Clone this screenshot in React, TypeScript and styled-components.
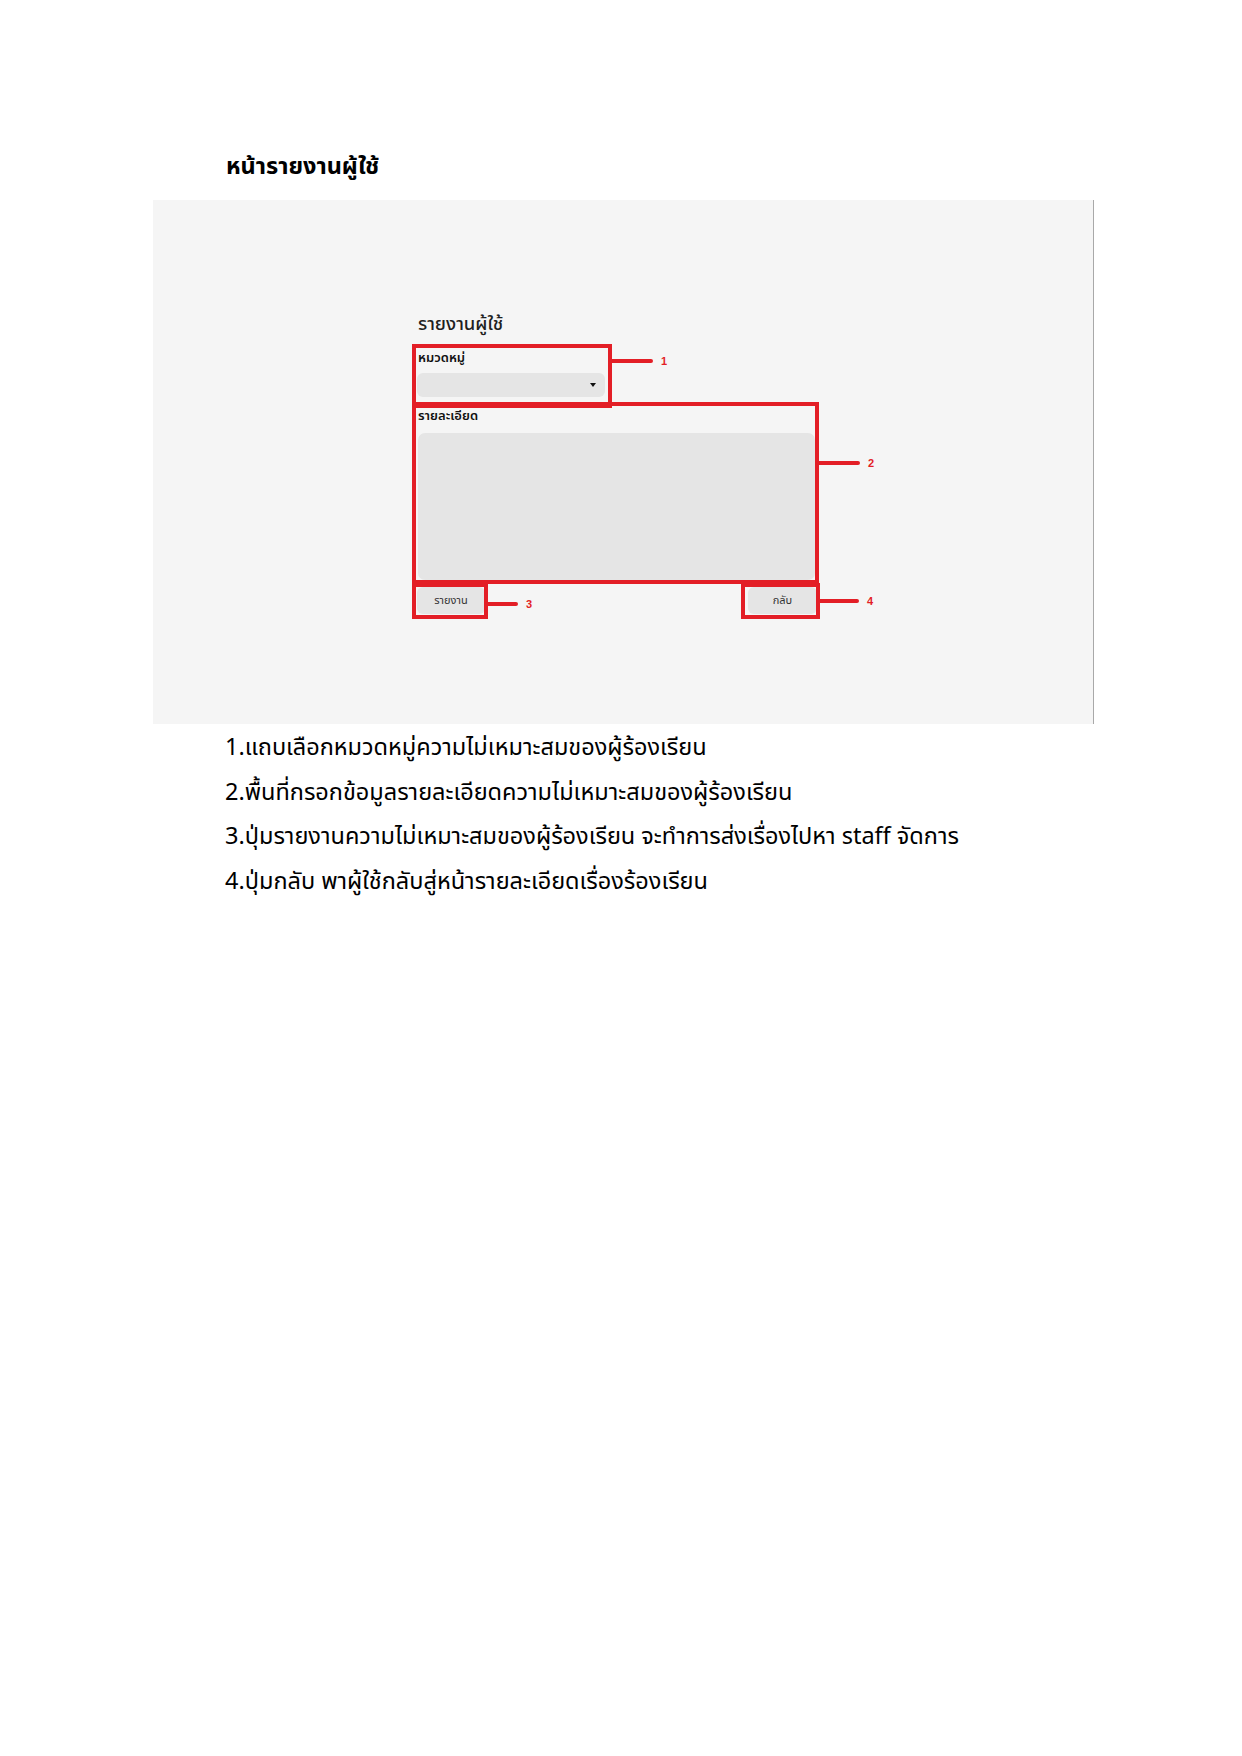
import styled, { createGlobalStyle } from "styled-components";

const GlobalStyle = createGlobalStyle`
  html, body {
    margin: 0;
    padding: 0;
    background: #ffffff;
  }
  body {
    font-family: "Noto Sans", "Noto Sans Thai", "DejaVu Sans", sans-serif;
    color: #000000;
  }
`;

const RED = "#e31e26";

const Page = styled.div`
  width: 1242px;
  min-height: 1756px;
  padding: 148px 0 0 153px;
  box-sizing: border-box;
`;

const Heading = styled.h1`
  margin: 0 0 18px 73px;
  font-size: 23.5px;
  line-height: 34px;
  font-weight: 700;
  color: #000;
`;

const Shot = styled.section`
  width: 941px;
  height: 524px;
  box-sizing: border-box;
  background: #f5f5f5;
  border-right: 1px solid #a9a9a9;
  padding: 110px 0 0 264px;
`;

const Form = styled.div`
  width: 400px;
  display: flex;
  flex-direction: column;
  align-items: flex-start;
`;

const FormTitle = styled.h2`
  margin: 0 0 12px 1px;
  font-size: 18.5px;
  line-height: 26px;
  font-weight: 500;
  color: #1f1f1f;
`;

const Field = styled.div<{ $w: number }>`
  width: ${({ $w }) => $w}px;
  display: flex;
  flex-direction: column;
`;

const Label = styled.label`
  font-size: 13px;
  line-height: 18px;
  font-weight: 600;
  color: #111;
  margin-left: 1px;
`;

const Select = styled.div`
  margin-top: 7px;
  height: 24px;
  border-radius: 6px;
  background: #e5e5e5;
  display: flex;
  align-items: center;
  justify-content: flex-end;
  padding-right: 9px;
`;

const Caret = styled.span`
  width: 0;
  height: 0;
  border-left: 3.5px solid transparent;
  border-right: 3.5px solid transparent;
  border-top: 4px solid #111;
`;

const TextArea = styled.div`
  margin: 9px 0 0 1px;
  height: 147px;
  border-radius: 7px;
  background: #e5e5e5;
`;

const Buttons = styled.div`
  margin-top: 7px;
  width: 400px;
  display: flex;
  justify-content: space-between;
`;

const Button = styled.button<{ $w: number }>`
  width: ${({ $w }) => $w}px;
  height: 27px;
  border: 0;
  border-radius: 6px;
  background: #e5e5e5;
  font-family: inherit;
  font-size: 11px;
  color: #333;
  padding: 0;
`;

/* annotation overlays: red frame + leader line + number */
const Marked = styled.div<{ $gap?: number }>`
  position: relative;
  margin-top: ${({ $gap }) => $gap ?? 0}px;
`;

const Frame = styled.div<{ $t: number; $r: number; $b: number; $l: number }>`
  position: absolute;
  top: ${({ $t }) => -$t}px;
  right: ${({ $r }) => -$r}px;
  bottom: ${({ $b }) => -$b}px;
  left: ${({ $l }) => -$l}px;
  border: 4px solid ${RED};
  pointer-events: none;
`;

const Leader = styled.div<{ $y: number }>`
  position: absolute;
  left: calc(100% + 4px);
  top: ${({ $y }) => $y}px;
  display: flex;
  align-items: center;
  gap: 8px;
`;

const LeaderLine = styled.span<{ $len: number }>`
  display: block;
  width: ${({ $len }) => $len}px;
  height: 4px;
  background: ${RED};
  border-radius: 0 2px 2px 0;
`;

const Num = styled.span`
  font-family: "Liberation Sans", Arial, sans-serif;
  font-size: 11px;
  font-weight: 700;
  color: ${RED};
  line-height: 12px;
`;

type Box = { t: number; r: number; b: number; l: number };

function Callout({
  n,
  box,
  y,
  len,
  gap,
  children,
}: {
  n: number;
  box: Box;
  y: number;
  len: number;
  gap?: number;
  children: React.ReactNode;
}) {
  return (
    <Marked $gap={gap}>
      {children}
      <Frame $t={box.t} $r={box.r} $b={box.b} $l={box.l}>
        <Leader $y={y}>
          <LeaderLine $len={len} />
          <Num>{n}</Num>
        </Leader>
      </Frame>
    </Marked>
  );
}

const Notes = styled.ol`
  list-style: none;
  margin: 0 0 0 72px;
  padding: 0;
  display: flex;
  flex-direction: column;
`;

const Note = styled.li`
  font-size: 23.5px;
  line-height: 44.7px;
  color: #000;
`;

const notes = [
  "1.แถบเลือกหมวดหมู่ความไม่เหมาะสมของผู้ร้องเรียน",
  "2.พื้นที่กรอกข้อมูลรายละเอียดความไม่เหมาะสมของผู้ร้องเรียน",
  "3.ปุ่มรายงานความไม่เหมาะสมของผู้ร้องเรียน จะทำการส่งเรื่องไปหา staff จัดการ",
  "4.ปุ่มกลับ พาผู้ใช้กลับสู่หน้ารายละเอียดเรื่องร้องเรียน",
];

export default function App() {
  return (
    <>
      <GlobalStyle />
      <Page>
        <Heading>หน้ารายงานผู้ใช้</Heading>
        <Shot>
          <Form>
            <FormTitle>รายงานผู้ใช้</FormTitle>
            <Callout n={1} box={{ t: 4, r: 7, b: 11, l: 5 }} y={7} len={41}>
              <Field $w={188}>
                <Label>หมวดหมู่</Label>
                <Select>
                  <Caret />
                </Select>
              </Field>
            </Callout>
            <Callout n={2} box={{ t: 4, r: 4, b: 4, l: 5 }} y={51} len={41} gap={9}>
              <Field $w={398}>
                <Label>รายละเอียด</Label>
                <TextArea />
              </Field>
            </Callout>
            <Buttons>
              <Callout n={3} box={{ t: 4, r: 3, b: 5, l: 5 }} y={11} len={30}>
                <Button $w={68}>รายงาน</Button>
              </Callout>
              <Callout n={4} box={{ t: 4, r: 3, b: 5, l: 7 }} y={8} len={39}>
                <Button $w={69}>กลับ</Button>
              </Callout>
            </Buttons>
          </Form>
        </Shot>
        <Notes>
          {notes.map((t) => (
            <Note key={t}>{t}</Note>
          ))}
        </Notes>
      </Page>
    </>
  );
}
